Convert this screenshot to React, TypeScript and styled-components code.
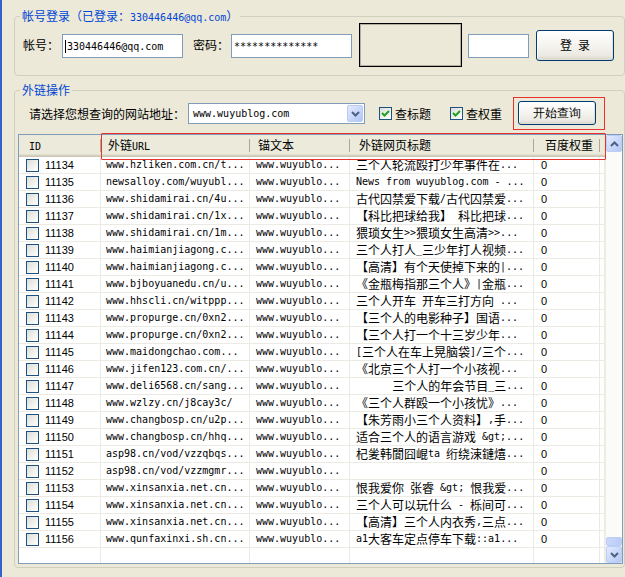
import React from "react";
import styled, { createGlobalStyle } from "styled-components";

const GlobalStyle = createGlobalStyle`
  html, body { margin: 0; padding: 0; background: #ECE9D8; }
  body { font-family: "Noto Sans CJK SC", sans-serif; font-size: 12px; color: #000; }
  * { box-sizing: border-box; }
`;

const RED = "#E8302C";

const Frame = styled.div`
  width: 625px;
  height: 577px;
  overflow: hidden;
  background: #ECE9D8;
  border-left: 2px solid #3263cc;
  padding: 10px 0 0 12px;
  display: flex;
  flex-direction: column;
`;

const Group = styled.fieldset<{ $top?: number }>`
  margin: ${(p) => p.$top ?? 0}px 0 0 0;
  padding: 0;
  width: 611px;
  min-width: 0;
  border: 1px solid #D0D0BF;
  border-radius: 4px;
`;

const Legend = styled.legend`
  margin-left: 5px;
  padding: 0 2px;
  height: 12px;
  line-height: 12px;
  color: #0046D5;
  white-space: pre;
`;

const Asc = styled.span`
  font-family: "DejaVu Sans Mono", "Liberation Mono", monospace;
  font-size: 10px;
`;
const Han = styled.span`
  font-family: "Noto Sans CJK SC", sans-serif;
  font-size: 12px;
`;

function Mixed({ text }: { text: string }) {
  const parts = text.match(/[\x00-\x7f]+|[^\x00-\x7f]+/g) ?? [];
  return (
    <>
      {parts.map((p, i) =>
        /^[\x00-\x7f]/.test(p) ? <Asc key={i}>{p}</Asc> : <Han key={i}>{p}</Han>
      )}
    </>
  );
}

/* ---------- login group ---------- */
const LoginRow = styled.div`
  display: flex;
  align-items: center;
  padding: 1px 0 8px 8px;
`;

const Label = styled.span<{ $ml?: number }>`
  margin-left: ${(p) => p.$ml ?? 0}px;
  white-space: pre;
  line-height: 14px;
`;

const Field = styled.div<{ $w: number; $ml: number }>`
  width: ${(p) => p.$w}px;
  height: 24px;
  margin-left: ${(p) => p.$ml}px;
  margin-top: 2px;
  border: 1px solid #7F9DB9;
  background: #fff;
  display: flex;
  align-items: center;
  padding-left: 2px;
  font-family: "DejaVu Sans Mono", "Liberation Mono", monospace;
  font-size: 10px;
  white-space: pre;
`;

const Caret = styled.span`
  display: inline-block;
  width: 1px;
  height: 13px;
  background: #000;
  margin-right: 1px;
`;

const Blank = styled.div`
  width: 103px;
  height: 44px;
  margin-left: 7px;
  border: 1px solid #000;
  box-shadow: inset 0 0 0 1px rgba(0, 0, 0, 0.25);
`;

const XpButton = styled.button<{ $w: number; $h: number; $ml?: number }>`
  width: ${(p) => p.$w}px;
  height: ${(p) => p.$h}px;
  margin: 0 0 0 ${(p) => p.$ml ?? 0}px;
  padding: 0;
  border: 1px solid #003C74;
  border-radius: 3px;
  background: linear-gradient(180deg, #ffffff 0%, #f6f5f1 45%, #ebe9e1 85%, #d8d3c8 100%);
  box-shadow: inset -1px -1px 0 #e0ddd2, inset 1px 1px 0 #ffffff;
  color: #000;
  font-size: 12px;
  line-height: 14px;
  display: flex;
  align-items: center;
  justify-content: center;
  white-space: pre;
`;

/* ---------- query group ---------- */
const QueryRow = styled.div`
  display: flex;
  align-items: center;
  padding: 1px 0 0 14px;
`;

const Combo = styled.div`
  position: relative;
  width: 177px;
  height: 21px;
  margin-left: 3px;
  border: 1px solid #7F9DB9;
  background: #fff;
  display: flex;
  align-items: center;
  padding-left: 4px;
  font-family: "DejaVu Sans Mono", "Liberation Mono", monospace;
  font-size: 10px;
`;

const ComboBtn = styled.div`
  position: absolute;
  right: 1px;
  top: 1px;
  width: 16px;
  height: 17px;
  border: 1px solid #B9CBF3;
  border-radius: 2px;
  background: linear-gradient(135deg, #E4EBFD 0%, #C4D4FA 60%, #B1C6F6 100%);
  display: flex;
  align-items: center;
  justify-content: center;
`;

const CheckBox = styled.span<{ $ml?: number }>`
  display: inline-flex;
  align-items: center;
  justify-content: center;
  width: 13px;
  height: 13px;
  margin-left: ${(p) => p.$ml ?? 0}px;
  border: 1px solid #1C5180;
  background: linear-gradient(135deg, #DCDCD7 0%, #F2F2EF 60%, #FFFFFF 100%);
  flex: none;
`;

const CheckLabel = styled.span`
  margin-left: 3px;
  line-height: 14px;
`;

const RedFrame = styled.div`
  margin-left: 11px;
  border: 1px solid ${RED};
  padding: 3px 8px 4px 4px;
`;

/* ---------- list view ---------- */
const ListFrame = styled.div`
  position: relative;
  width: 605px;
  height: 430px;
  margin: 4px 0 3px 3px;
  border: 1px solid #7F9DB9;
  background: #fff;
  display: flex;
`;

const Table = styled.div`
  flex: 1;
  display: flex;
  flex-direction: column;
  overflow: hidden;
`;

const COLS = "82px 149px 100px 184px 66px 1fr";

const HeaderRow = styled.div`
  display: grid;
  grid-template-columns: ${COLS};
  height: 22px;
  background: #EBEADB;
  box-shadow: inset 0 -1px #CBC7B8, inset 0 -2px #D6D2C2, inset 0 -3px #E2DECD;
  flex: none;
`;

const HeadCell = styled.div<{ $pl: number; $last?: boolean }>`
  position: relative;
  padding-left: ${(p) => p.$pl}px;
  line-height: 20px;
  white-space: pre;
  overflow: hidden;
  &::after {
    content: "";
    display: ${(p) => (p.$last ? "none" : "block")};
    position: absolute;
    right: 0;
    top: 4px;
    bottom: 5px;
    width: 1px;
    background: #ACA899;
    box-shadow: 1px 0 0 #fff;
  }
`;

const Row = styled.div`
  display: grid;
  grid-template-columns: ${COLS};
  height: 17px;
  flex: none;
`;

const Cell = styled.div<{ $pl: number }>`
  display: flex;
  align-items: center;
  padding-left: ${(p) => p.$pl}px;
  border-right: 1px solid #ECEBE3;
  border-bottom: 1px solid #ECEBE3;
  white-space: pre;
  overflow: hidden;
  line-height: 16px;
`;

const Filler = styled.div`
  flex: 1;
  display: grid;
  grid-template-columns: ${COLS};
`;

const FillCell = styled.div`
  border-right: 1px solid #ECEBE3;
`;

const Num = styled.span`
  font-family: "Liberation Sans", Arial, sans-serif;
  font-size: 11px;
`;

const IdText = styled(Num)`
  margin-left: 6px;
`;

const HeaderMark = styled.div`
  position: absolute;
  left: 82px;
  top: -2px;
  width: 505px;
  height: 27px;
  border: 1px solid ${RED};
  border-radius: 1px;
  pointer-events: none;
  z-index: 2;
`;

const ScrollBar = styled.div`
  width: 17px;
  flex: none;
  display: flex;
  flex-direction: column;
  background: #FBFBF8;
  border-left: 1px solid #EEEDE5;
`;

const ScrollBtn = styled.div`
  width: 16px;
  height: 17px;
  border: 1px solid #BCCEF6;
  border-radius: 2px;
  background: linear-gradient(135deg, #E3EBFE 0%, #C6D5FA 60%, #B4C8F6 100%);
  display: flex;
  align-items: center;
  justify-content: center;
  flex: none;
`;

const Track = styled.div`
  flex: 1;
  display: flex;
  flex-direction: column;
  justify-content: flex-end;
`;

const Thumb = styled.div`
  height: 9px;
  border: 1px solid #BCCEF6;
  border-radius: 2px;
  background: linear-gradient(90deg, #C9D7FB 0%, #BACCF8 100%);
`;

function Chevron({ up }: { up?: boolean }) {
  return (
    <svg width="9" height="6" viewBox="0 0 9 6">
      <path
        d={up ? "M1 5 L4.5 1.5 L8 5" : "M1 1 L4.5 4.5 L8 1"}
        fill="none"
        stroke="#4D6185"
        strokeWidth="2"
      />
    </svg>
  );
}

function Tick() {
  return (
    <svg width="9" height="9" viewBox="0 0 9 9">
      <path d="M1 4 L3.5 6.5 L8 2" fill="none" stroke="#21A121" strokeWidth="2" />
    </svg>
  );
}

const rows: [string, string, string][] = [
  ["11134", "www.hzliken.com.cn/t...", "三个人轮流殴打少年事件在..."],
  ["11135", "newsalloy.com/wuyubl...", "News from wuyublog.com - ..."],
  ["11136", "www.shidamirai.cn/4u...", "古代囚禁爱下载/古代囚禁爱..."],
  ["11137", "www.shidamirai.cn/1x...", "【科比把球给我】 科比把球..."],
  ["11138", "www.shidamirai.cn/1m...", "猥琐女生>>猥琐女生高清>>..."],
  ["11139", "www.haimianjiagong.c...", "三个人打人_三少年打人视频..."],
  ["11140", "www.haimianjiagong.c...", "【高清】有个天使掉下来的|..."],
  ["11141", "www.bjboyuanedu.cn/u...", "《金瓶梅指那三个人》|金瓶..."],
  ["11142", "www.hhscli.cn/witppp...", "三个人开车 开车三打方向 ..."],
  ["11143", "www.propurge.cn/0xn2...", "【三个人的电影种子】国语..."],
  ["11144", "www.propurge.cn/0xn2...", "【三个人打一个十三岁少年..."],
  ["11145", "www.maidongchao.com...", "[三个人在车上晃脑袋]/三个..."],
  ["11146", "www.jifen123.com.cn/...", "《北京三个人打一个小孩视..."],
  ["11147", "www.deli6568.cn/sang...", "      三个人的年会节目_三..."],
  ["11148", "www.wzlzy.cn/j8cay3c/", "《三个人群殴一个小孩忧》..."],
  ["11149", "www.changbosp.cn/u2p...", "【朱芳雨小三个人资料】,手..."],
  ["11150", "www.changbosp.cn/hhq...", "适合三个人的语言游戏 &gt;..."],
  ["11151", "asp98.cn/vod/vzzqbqs...", "杞夎韩閬囧崐ta 绗绕涑鏈熺..."],
  ["11152", "asp98.cn/vod/vzzmgmr...", ""],
  ["11153", "www.xinsanxia.net.cn...", "恨我爱你 张睿 &gt; 恨我爱..."],
  ["11154", "www.xinsanxia.net.cn...", "三个人可以玩什么 - 栎间可..."],
  ["11155", "www.xinsanxia.net.cn...", "【高清】三个人内衣秀,三点..."],
  ["11156", "www.qunfaxinxi.sh.cn...", "a1大客车定点停车下载::a1..."],
];

export default function App() {
  return (
    <>
      <GlobalStyle />
      <Frame>
        <Group>
          <Legend>
            <Mixed text="帐号登录（已登录：330446446@qq.com）" />
          </Legend>
          <LoginRow>
            <Label>帐号：</Label>
            <Field $w={121} $ml={3}>
              <Caret />
              330446446@qq.com
            </Field>
            <Label $ml={10}>密码：</Label>
            <Field $w={121} $ml={2}>
              **************
            </Field>
            <Blank />
            <Field $w={61} $ml={6} />
            <XpButton $w={78} $h={31} $ml={7}>
              <Mixed text="登 录" />
            </XpButton>
          </LoginRow>
        </Group>

        <Group $top={8}>
          <Legend>外链操作</Legend>
          <QueryRow>
            <Label>请选择您想查询的网站地址：</Label>
            <Combo>
              www.wuyublog.com
              <ComboBtn>
                <Chevron />
              </ComboBtn>
            </Combo>
            <CheckBox $ml={14}>
              <Tick />
            </CheckBox>
            <CheckLabel>查标题</CheckLabel>
            <CheckBox $ml={19}>
              <Tick />
            </CheckBox>
            <CheckLabel>查权重</CheckLabel>
            <RedFrame>
              <XpButton $w={78} $h={24}>
                开始查询
              </XpButton>
            </RedFrame>
          </QueryRow>

          <ListFrame>
            <Table>
              <HeaderRow>
                <HeadCell $pl={10}>
                  <Mixed text="ID" />
                </HeadCell>
                <HeadCell $pl={7}>
                  <Mixed text="外链URL" />
                </HeadCell>
                <HeadCell $pl={8}>
                  <Mixed text="锚文本" />
                </HeadCell>
                <HeadCell $pl={9}>
                  <Mixed text="外链网页标题" />
                </HeadCell>
                <HeadCell $pl={11}>
                  <Mixed text="百度权重" />
                </HeadCell>
                <HeadCell $pl={0} $last />
              </HeaderRow>
              {rows.map(([id, url, title]) => (
                <Row key={id}>
                  <Cell $pl={7}>
                    <CheckBox />
                    <IdText>{id}</IdText>
                  </Cell>
                  <Cell $pl={5}>
                    <Asc>{url}</Asc>
                  </Cell>
                  <Cell $pl={6}>
                    <Asc>www.wuyublo...</Asc>
                  </Cell>
                  <Cell $pl={6}>
                    <Mixed text={title} />
                  </Cell>
                  <Cell $pl={7}>
                    <Num>0</Num>
                  </Cell>
                  <Cell $pl={0} />
                </Row>
              ))}
              <Filler>
                <FillCell />
                <FillCell />
                <FillCell />
                <FillCell />
                <FillCell />
                <FillCell />
              </Filler>
            </Table>
            <ScrollBar>
              <ScrollBtn>
                <Chevron up />
              </ScrollBtn>
              <Track>
                <Thumb />
              </Track>
              <ScrollBtn>
                <Chevron />
              </ScrollBtn>
            </ScrollBar>
            <HeaderMark />
          </ListFrame>
        </Group>
      </Frame>
    </>
  );
}
